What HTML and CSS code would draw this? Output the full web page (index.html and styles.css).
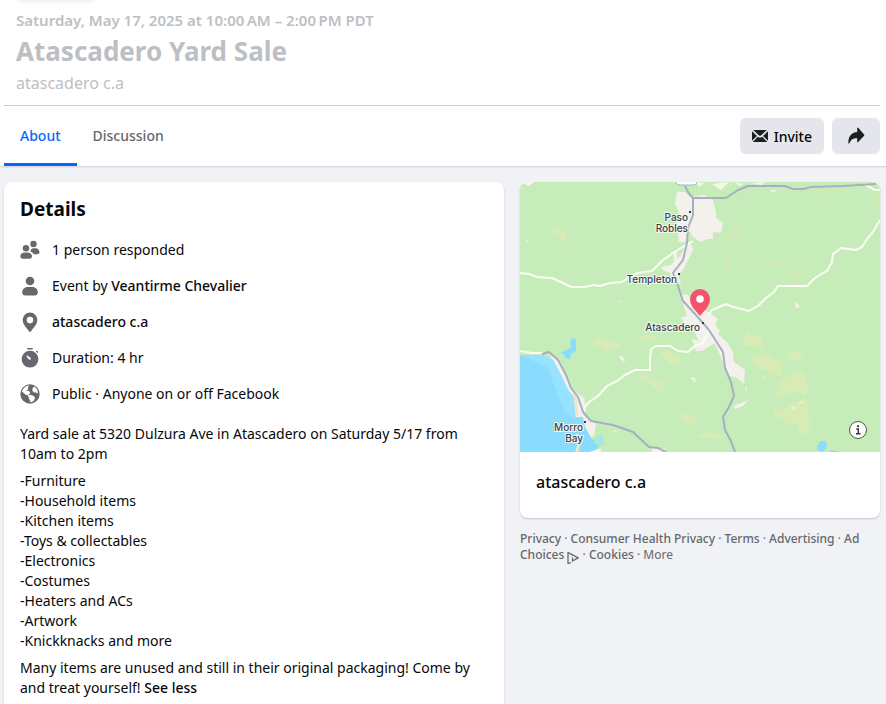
FILE: index.html
```html
<!DOCTYPE html>
<html lang="en">
<head>
  <meta charset="UTF-8" />
  <meta name="viewport" content="width=device-width, initial-scale=1.0" />
  <title>Atascadero Yard Sale</title>
  <link rel="stylesheet" href="styles.css">
</head>
<body>
  <!-- Event header -->
  <header class="event-header">
    <div class="date-tile"></div>
    <div class="event-title">
      <p class="event-date">Saturday, May 17, 2025 at 10:00&#8239;AM – 2:00&#8239;PM PDT</p>
      <h1>Atascadero Yard Sale</h1>
      <p class="event-place">atascadero c.a</p>
    </div>
    <div class="event-bar">
      <nav class="tabs">
        <a href="#about" class="tab active">About</a>
        <a href="#discussion" class="tab">Discussion</a>
      </nav>
      <div class="actions">
        <button type="button" class="btn">
          <svg width="16" height="16" viewBox="0 0 16 16" fill="#1c1e21">
            <path d="M1.200 2h13.600L9.200 7.300a1.800 1.800 0 0 1-2.400 0zM0 3.200 5 8 0 12.800zM16 3.200 11 8l5 4.800zM5.800 8.700l.3.2a2.900 2.900 0 0 0 3.800 0l.3-.2 5 5.300H.8z"/>
          </svg>
          Invite
        </button>
        <button type="button" class="btn btn-share" aria-label="Share">
          <svg width="18" height="18" viewBox="0 0 18 18" fill="#1c1e21">
            <path d="M10.200 1.200c0-.6.6-.8 1-.4l5.900 6.600c.4.400.4 1 0 1.400l-5.900 6.300c-.4.400-1 .2-1-.4V11.300C6 11.300 4 12.600 2.400 16.300c-.3.700-1 .6-1-.2C1.200 9.500 4.400 5.300 10.200 5z"/>
          </svg>
        </button>
      </div>
    </div>
  </header>

  <main class="content">
    <!-- Details -->
    <section class="card details" id="about">
      <h2>Details</h2>
      <ul class="facts">
        <li>
          <svg class="icon" viewBox="0 0 20 20">
            <circle cx="13.500" cy="4" r="3.200"/>
            <path d="M10.400 11.500c0-2 1.400-3.300 3.400-3.300h1.700c2.300 0 4 1.800 4 4.100 0 1.200-1 1.900-2.200 1.900h-3.600c-.6-1.300-1.700-2.200-3.300-2.700z"/>
            <circle cx="6" cy="8.200" r="3.200"/>
            <path d="M4.600 12.400h3c2.300 0 4.400 1.500 4.400 3.900 0 1.600-1 2.500-2.500 2.500H2.700c-1.500 0-2.400-.9-2.400-2.500 0-2.400 2-3.900 4.300-3.900z"/>
          </svg>
          <span>1 person responded</span>
        </li>
        <li>
          <svg class="icon" viewBox="0 0 20 20">
            <circle cx="10" cy="5" r="4.300"/>
            <path d="M7.500 11h5c3 0 5.300 2.300 5.300 5.200 0 2-1.200 3.300-3.200 3.300H5.400c-2 0-3.200-1.300-3.200-3.300C2.200 13.300 4.500 11 7.500 11z"/>
          </svg>
          <span>Event by <a href="#host">Veantirme Chevalier</a></span>
        </li>
        <li>
          <svg class="icon" viewBox="0 0 20 20">
            <path fill-rule="evenodd" d="M10 .5a7.300 7.300 0 0 0-7.300 7.300c0 4.400 3.200 7.300 5.500 10.500.8 1.200 1.100 1.500 1.800 1.500s1-.3 1.800-1.500c2.300-3.200 5.500-6.100 5.500-10.500A7.300 7.300 0 0 0 10 .5zm0 4.300a3.300 3.300 0 1 1 0 6.600 3.300 3.300 0 0 1 0-6.600z"/>
          </svg>
          <a href="#place">atascadero c.a</a>
        </li>
        <li>
          <svg class="icon" viewBox="0 0 20 20">
            <rect x="7" y="0" width="6" height="1.600" rx=".8"/>
            <path d="m15.900 3.400.9-.8 1.500 1.400-.9 1z"/>
            <path fill-rule="evenodd" d="M10 2.800a8.400 8.400 0 1 0 0 16.800 8.400 8.400 0 0 0 0-16.800zM6.700 7.800c.3-.3.700-.2 1 0l2.400 1.600c.9.700.9 1.500.4 2s-1.300.4-2-.4L6.800 8.800c-.2-.3-.4-.7-.1-1z"/>
          </svg>
          <span>Duration: 4 hr</span>
        </li>
        <li>
          <svg class="icon" viewBox="0 0 20 20">
            <circle cx="10" cy="10" r="9.700"/>
            <path fill="#fff" d="M1.900 7.600C2.600 5 4.400 3 6.700 2l2.500-.4-1.400 2 .6 1.700-2.300 1.300 3 .4 1.200 2-2 2.300-2.400-.2-1.300-1.300zM14 2.600c1.700.9 3.100 2.500 3.800 4.300l-.3 2.800-2-1.400-1.700.3-1.500-2 .2-2.200zM7.800 11.600l2.600-.9 3.300 1.300 1.500 1.800-1.600 3.300-2.900 1.300-1.300-3z"/>
          </svg>
          <span>Public · Anyone on or off Facebook</span>
        </li>
      </ul>
      <div class="description">
        <p>Yard sale at 5320 Dulzura Ave in Atascadero on Saturday 5/17 from 10am to 2pm</p>
        <p>
          -Furniture<br>
          -Household items<br>
          -Kitchen items<br>
          -Toys &amp; collectables<br>
          -Electronics<br>
          -Costumes<br>
          -Heaters and ACs<br>
          -Artwork<br>
          -Knickknacks and more
        </p>
        <p>Many items are unused and still in their original packaging! Come by and treat yourself! <button type="button" class="see-less">See less</button></p>
      </div>
    </section>

    <aside class="side">
      <!-- Map -->
      <section class="card map-card">
        <svg class="map" viewBox="0 0 360 270" role="img" aria-label="Map of Atascadero">
          <rect width="360" height="270" fill="#c6edb9"/>

          <!-- dry land -->
          <g fill="#d7ebb5">
            <path d="M32 46l7-1 8 8-1 9-5-5-2-5-6-2z"/>
            <path d="M73 157l8-2 8 4 12 2-2 4-9 2-5 3-4-5-8-3zM118 157l6-4 10 2 4 6-6-3-9 1zM140 170l8-3 12 8 2 7-10 1-7-6zM119 191l11 6 17 3-6 4 4 5-8-1-8-8-8-2zM158 235l6-3 10 1 2 8-11 1zM178 254l9-4 14 3 3 4-17-2-7 3z"/>
            <path d="M222 160l6-11 5 5 6-1 4 6-1 8-8-2-10-1zM231 174l13-3 17 9 1 14-8-1-18-9zM266 175l6-6 11 1 1 4-8 4-8 1zM258 200l8-4 9-7 10 3 4 14-3 8-11-5-8 3-8-5zM253 206l9 3 4 5-10 2zM254 222l8 7 9-7 14-6 4 8-1 13 4 7-6 9-9-3 2-9-11 1-6-6-7-2z"/>
          </g>
          <g fill="#cdeab4">
            <path d="M210 43l10 5-1 13-6-4-8 6 2-13zM204 71l8 4-2 13-6-6zM224 79l12-5-5 9-12 6zM246 78l17 3-5 5-12-3zM268 85l14 3 1 10-10 5-7-11zM354 8h6v24l-5-4zM305 97l11 7-5 2zM272 108l18 4-9 6zM174 98l10-3-5 9zM300 10l12 3-8 4z"/>
          </g>

          <!-- towns -->
          <g fill="#f4f1ec">
            <path d="M157 10l8 0 5 5 14-2 9 5 3 12 0 6 7 5-2 10-8-1 0 7-6 0-6 3-8-5-3-6-3 3-2 8-6 0-2-18 2-12-4-8z"/>
            <path d="M166 62l4-1 3 7-6 12-4 8-5 6 3 8-4 1-4-6-3-6-7-3-2-3 10-2 3-4-1-9 4-1v8l4-4z"/>
            <path d="M160 112l8 1 8 12 14 6 8 6-3 6 5 6-2 3 9 8 6 10 1 10 11 8-1 14-7-6-9-3-6-15-7-17-13 8h-6l-4-12 7 2-5-10-10-8-3-6 6-1z"/>
            <path d="M30 172l6 3 8 14 8 18 12 9 2 12-2 6 12 8-2 12-10 4-12-20-4-24-8-20-8-15z"/>
            <path d="M99 173l5 3 1 4-5-3zM6 57l2 1v3zM170 195l6 1-1 5zM214 224l14-6-5 6-8 3zM242 200l2-7 1 1zM225 206l2-1-1 5zM97 120h3l2-2zM276 119l4 6-5 1zM132 266l14 1-2 3h-12zM92 249l8-1-5 2z"/>
            <path d="M0 0h14l-5 4zM192 2l17-2-8 8zM215 0l8 2-4 2zM230 1l16-1-5 3zM250 8h8l-5 2zM176 0l8 1-5 4zM272 224l3 2-2 2zM280 220l3-1-2 3zM70 267h11v3h-11z" fill="#f5f7ec"/>
          </g>

          <!-- water -->
          <path fill="#8adcff" d="M0 173h23l10 5 8 15 7 15 6 7 2 20 7 0 2 10 7 12 8 5-4 6-7 2H0z"/>
          <path fill="#96e2ff" d="M0 173h23l10 5 8 15 7 15 6 7 1 22-10-6-18-46z"/>
          <path fill="#8adcff" d="M42 170l9-4-1-7 2-3 4 1v12l-5 3-1 5-5-1-1-4-2 1zM297 268v-4l3-5h6l1 6-4 5zM310 268l12 2h-12z"/>
          <path fill="#a5eadb" d="M74 256l9-5v9l2 4-10-2z"/>
          <path fill="none" stroke="#f0e6ca" stroke-width="3" d="M55 212l2 22M57 252l2 10-3 10"/>

          <!-- small roads -->
          <g fill="none" stroke="#fbfcf4" stroke-width="2" stroke-linejoin="round">
            <path d="M0 91l9 1 8 3 15 1 11 5 8 4 14 0 9-2 6 1 10-3 12-1 8-5 8-4 14-2 11-11 13-9 17-10"/>
            <path d="M188 134l4-6 14-6 7 3 9 2 7 2 9-5 8-8 8-6 4-6 29 0 7-7 7-5 6-3 5-9 1-8 8-6 15 2 6-3 5-8 6-7 4-7 4-6"/>
            <path d="M64 226l5-6 9-6 9-10 10-5 8-6 10-5 15 0 0-12 1-9 5-3h14l8 5 10 1 7-6 8-3 8-16"/>
            <path d="M0 169l12 2h12M344 2l11 6h5"/>
          </g>

          <!-- highways -->
          <g fill="none" stroke="#a6b0c2" stroke-width="2" stroke-linejoin="round">
            <path d="M165 4L168 10 173 16V33L168 46 167 61 163 78 153 91 158 104 163 119 176 133 189 148 203 170 205 186 211 200 214 214 209 225 203 235 205 248 211 259 215 270"/>
            <path d="M174 16h32l12-8 10-4h37l8 3h10l8-2 32-1 33-2"/>
            <path d="M22 172L29 170 38 178 46 193 51 206 58 215 63 230 71 239 93 243 113 250 129 265 138 266 146 270"/>
          </g>
          <path fill="#fff" stroke="#a6b0c2" d="M156-2v3q1 2 4 2h13q3 0 4-2v-3z"/>

          <g fill="#2e3a4a">
            <rect x="169" y="29" width="2" height="2"/>
            <rect x="158" y="91" width="2" height="2"/>
            <rect x="182" y="140" width="2" height="2"/>
            <rect x="64" y="239" width="2" height="2"/>
          </g>
          <g class="map-labels">
            <text x="168" y="39">Paso</text>
            <text x="168" y="50">Robles</text>
            <text x="157" y="101">Templeton</text>
            <text x="180" y="149">Atascadero</text>
            <text x="63" y="249">Morro</text>
            <text x="63" y="260">Bay</text>
          </g>

          <!-- pin -->
          <path fill="#f5536c" d="M180 107a10 10 0 0 0-10 10c0 7 5 11 10 17 5-6 10-10 10-17a10 10 0 0 0-10-10z"/>
          <circle cx="180" cy="117" r="3.800" fill="#fff"/>

          <!-- info -->
          <circle cx="338" cy="248" r="8.500" fill="#fff" stroke="#4c5a46"/>
          <circle cx="338" cy="244.200" r="1.100" fill="#333"/>
          <path fill="none" stroke="#333" stroke-width="1.400" d="M336.300 247h2v4.700M336 251.700h4.500"/>
        </svg>
        <h3>atascadero c.a</h3>
      </section>

      <footer class="footer">
        <a href="#privacy">Privacy</a> ·
        <a href="#health">Consumer Health Privacy</a> ·
        <a href="#terms">Terms</a> ·
        <a href="#ads">Advertising</a> ·
        <a href="#choices">Ad Choices
          <svg class="adchoices" width="12" height="12" viewBox="0 0 12 12" fill="none" stroke="#65686c" stroke-width="1.300">
            <path d="M4 10.500 1 11.500v-11l10.300 5.300L5.500 9V5.500"/>
            <path d="M5 3.200h1"/>
          </svg></a> ·
        <a href="#cookies">Cookies</a> ·
        <button type="button" class="more">More</button>
      </footer>
    </aside>
  </main>
</body>
</html>
```

FILE: styles.css
```css
* {
  box-sizing: border-box;
}
body {
  margin: 0;
  font-family: "Noto Sans", "Open Sans", sans-serif;
  font-size: 14px;
  line-height: 20px;
  color: #080809;
  background-color: #f0f2f5;
}
h1, h2, h3, p, ul {
  margin: 0;
  padding: 0;
}
a {
  color: inherit;
  font-weight: 500;
  text-decoration: none;
}
button {
  font-family: inherit;
  border: none;
  cursor: pointer;
}

/* Header */
.event-header {
  position: relative;
  padding: 0 6px 0 4px;
  background-color: #fff;
  box-shadow: 0 1px 2px rgba(0, 0, 0, 0.15);
}
.date-tile {
  position: absolute;
  top: -20px;
  left: 16px;
  width: 80px;
  height: 16px;
  border-radius: 8px;
  box-shadow: 0 2px 8px rgba(0, 0, 0, 0.2);
}
.event-title {
  padding: 10px 12px;
  color: #bcc0c4;
  border-bottom: 1px solid #c9ccd1;
}
.event-date {
  font-size: 15px;
  font-weight: 600;
}
h1 {
  font-size: 26px;
  line-height: 42px;
}
.event-place {
  font-size: 16px;
  line-height: 23px;
}
.event-bar {
  display: flex;
  justify-content: space-between;
  align-items: center;
}
.tabs {
  display: flex;
}
.tab {
  padding: 2px 16px 0;
  line-height: 55px;
  color: #65686c;
  border-bottom: 3px solid transparent;
}
.tab.active {
  color: #0866ff;
  border-bottom-color: #0866ff;
}
.actions {
  display: flex;
  gap: 8px;
}
.btn {
  display: flex;
  align-items: center;
  justify-content: center;
  gap: 6px;
  height: 36px;
  padding: 0 12px;
  font-size: 14px;
  font-weight: 500;
  color: #080809;
  background-color: #e4e6eb;
  border-radius: 6px;
}
.btn-share {
  width: 48px;
}

/* Content */
.content {
  display: grid;
  grid-template-columns: minmax(0, 1fr) 360px;
  align-items: start;
  gap: 16px;
  padding: 16px 6px 0 4px;
}
.card {
  background-color: #fff;
  border-radius: 8px;
  box-shadow: 0 1px 2px rgba(0, 0, 0, 0.2);
}
.details {
  padding: 16px;
}
h2 {
  font-size: 19px;
  line-height: 22px;
}
.facts {
  display: grid;
  gap: 16px;
  padding: 20px 0;
  list-style: none;
}
.facts li {
  display: flex;
  align-items: center;
  gap: 12px;
}
.icon {
  width: 20px;
  height: 20px;
  fill: #65686c;
}
.description {
  display: grid;
  gap: 7px;
}
.see-less {
  padding: 0;
  font-size: 14px;
  font-weight: 500;
  line-height: 18px;
  color: inherit;
  background: none;
}

/* Map */
.map-card {
  overflow: hidden;
}
.map {
  display: block;
  width: 100%;
}
.map-labels {
  font-family: Inter, sans-serif;
  font-size: 10px;
  font-weight: 500;
  text-anchor: end;
  fill: #37424f;
  stroke: #f4f8ee;
  stroke-width: 2px;
  stroke-linejoin: round;
  paint-order: stroke;
}
h3 {
  padding: 20px 16px 26px;
  font-size: 16px;
  font-weight: 500;
  line-height: 20px;
}

/* Footer links */
.footer {
  padding-top: 13px;
  font-size: 12px;
  line-height: 16px;
  color: #65686c;
}
.adchoices {
  vertical-align: -5px;
}
.more {
  padding: 0;
  font-size: 12px;
  line-height: 14px;
  color: inherit;
  background: none;
}
```
